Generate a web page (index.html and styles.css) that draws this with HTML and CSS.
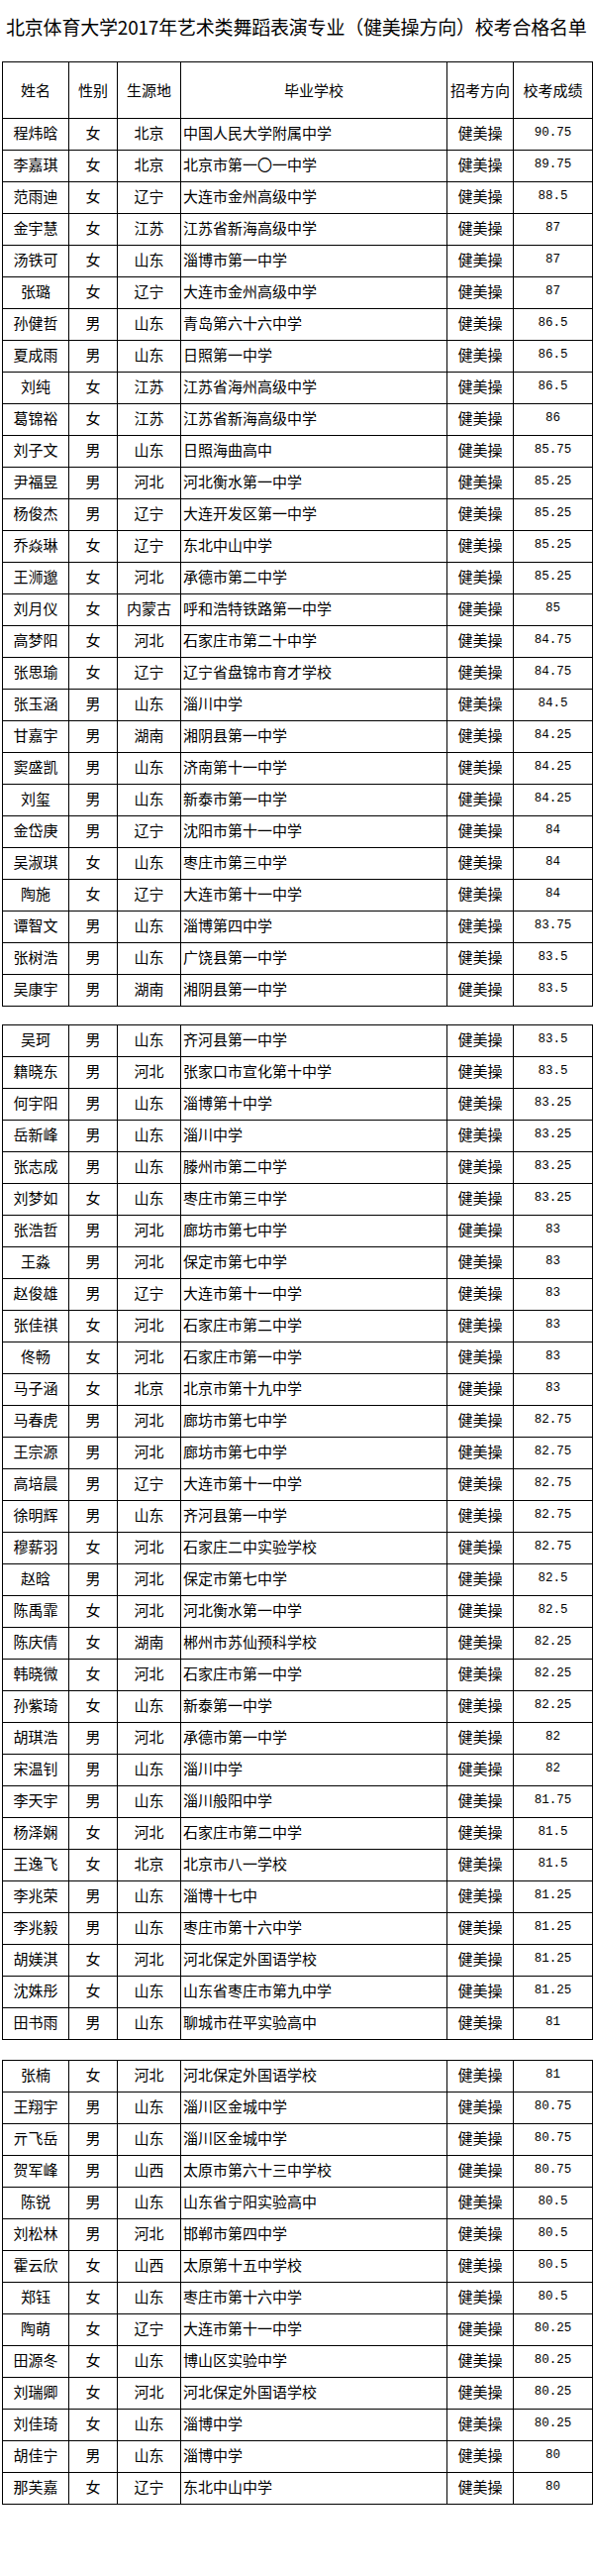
FILE: index.html
```html
<!DOCTYPE html>
<html lang="zh">
<head>
<meta charset="utf-8">
<title>北京体育大学2017年艺术类舞蹈表演专业（健美操方向）校考合格名单</title>
<link rel="stylesheet" href="styles.css">
</head>
<body>
<div class="sheet">
  <div class="title">北京体育大学2017年艺术类舞蹈表演专业（健美操方向）校考合格名单</div>

  <table class="list">
    <colgroup><col class="c-name"><col class="c-sex"><col class="c-prov"><col class="c-school"><col class="c-dir"><col class="c-score"></colgroup>
    <tr class="head"><td>姓名</td><td>性别</td><td>生源地</td><td>毕业学校</td><td>招考方向</td><td>校考成绩</td></tr>
    <tr><td>程炜晗</td><td>女</td><td>北京</td><td class="school">中国人民大学附属中学</td><td>健美操</td><td class="num">90.75</td></tr>
    <tr><td>李嘉琪</td><td>女</td><td>北京</td><td class="school">北京市第一〇一中学</td><td>健美操</td><td class="num">89.75</td></tr>
    <tr><td>范雨迪</td><td>女</td><td>辽宁</td><td class="school">大连市金州高级中学</td><td>健美操</td><td class="num">88.5</td></tr>
    <tr><td>金宇慧</td><td>女</td><td>江苏</td><td class="school">江苏省新海高级中学</td><td>健美操</td><td class="num">87</td></tr>
    <tr><td>汤铁可</td><td>女</td><td>山东</td><td class="school">淄博市第一中学</td><td>健美操</td><td class="num">87</td></tr>
    <tr><td>张璐</td><td>女</td><td>辽宁</td><td class="school">大连市金州高级中学</td><td>健美操</td><td class="num">87</td></tr>
    <tr><td>孙健哲</td><td>男</td><td>山东</td><td class="school">青岛第六十六中学</td><td>健美操</td><td class="num">86.5</td></tr>
    <tr><td>夏成雨</td><td>男</td><td>山东</td><td class="school">日照第一中学</td><td>健美操</td><td class="num">86.5</td></tr>
    <tr><td>刘纯</td><td>女</td><td>江苏</td><td class="school">江苏省海州高级中学</td><td>健美操</td><td class="num">86.5</td></tr>
    <tr><td>葛锦裕</td><td>女</td><td>江苏</td><td class="school">江苏省新海高级中学</td><td>健美操</td><td class="num">86</td></tr>
    <tr><td>刘子文</td><td>男</td><td>山东</td><td class="school">日照海曲高中</td><td>健美操</td><td class="num">85.75</td></tr>
    <tr><td>尹福昱</td><td>男</td><td>河北</td><td class="school">河北衡水第一中学</td><td>健美操</td><td class="num">85.25</td></tr>
    <tr><td>杨俊杰</td><td>男</td><td>辽宁</td><td class="school">大连开发区第一中学</td><td>健美操</td><td class="num">85.25</td></tr>
    <tr><td>乔焱琳</td><td>女</td><td>辽宁</td><td class="school">东北中山中学</td><td>健美操</td><td class="num">85.25</td></tr>
    <tr><td>王浉邈</td><td>女</td><td>河北</td><td class="school">承德市第二中学</td><td>健美操</td><td class="num">85.25</td></tr>
    <tr><td>刘月仪</td><td>女</td><td>内蒙古</td><td class="school">呼和浩特铁路第一中学</td><td>健美操</td><td class="num">85</td></tr>
    <tr><td>高梦阳</td><td>女</td><td>河北</td><td class="school">石家庄市第二十中学</td><td>健美操</td><td class="num">84.75</td></tr>
    <tr><td>张思瑜</td><td>女</td><td>辽宁</td><td class="school">辽宁省盘锦市育才学校</td><td>健美操</td><td class="num">84.75</td></tr>
    <tr><td>张玉涵</td><td>男</td><td>山东</td><td class="school">淄川中学</td><td>健美操</td><td class="num">84.5</td></tr>
    <tr><td>甘嘉宇</td><td>男</td><td>湖南</td><td class="school">湘阴县第一中学</td><td>健美操</td><td class="num">84.25</td></tr>
    <tr><td>窦盛凯</td><td>男</td><td>山东</td><td class="school">济南第十一中学</td><td>健美操</td><td class="num">84.25</td></tr>
    <tr><td>刘玺</td><td>男</td><td>山东</td><td class="school">新泰市第一中学</td><td>健美操</td><td class="num">84.25</td></tr>
    <tr><td>金岱庚</td><td>男</td><td>辽宁</td><td class="school">沈阳市第十一中学</td><td>健美操</td><td class="num">84</td></tr>
    <tr><td>吴淑琪</td><td>女</td><td>山东</td><td class="school">枣庄市第三中学</td><td>健美操</td><td class="num">84</td></tr>
    <tr><td>陶施</td><td>女</td><td>辽宁</td><td class="school">大连市第十一中学</td><td>健美操</td><td class="num">84</td></tr>
    <tr><td>谭智文</td><td>男</td><td>山东</td><td class="school">淄博第四中学</td><td>健美操</td><td class="num">83.75</td></tr>
    <tr><td>张树浩</td><td>男</td><td>山东</td><td class="school">广饶县第一中学</td><td>健美操</td><td class="num">83.5</td></tr>
    <tr><td>吴康宇</td><td>男</td><td>湖南</td><td class="school">湘阴县第一中学</td><td>健美操</td><td class="num">83.5</td></tr>
  </table>

  <table class="list gap1">
    <colgroup><col class="c-name"><col class="c-sex"><col class="c-prov"><col class="c-school"><col class="c-dir"><col class="c-score"></colgroup>
    <tr><td>吴珂</td><td>男</td><td>山东</td><td class="school">齐河县第一中学</td><td>健美操</td><td class="num">83.5</td></tr>
    <tr><td>籍晓东</td><td>男</td><td>河北</td><td class="school">张家口市宣化第十中学</td><td>健美操</td><td class="num">83.5</td></tr>
    <tr><td>何宇阳</td><td>男</td><td>山东</td><td class="school">淄博第十中学</td><td>健美操</td><td class="num">83.25</td></tr>
    <tr><td>岳新峰</td><td>男</td><td>山东</td><td class="school">淄川中学</td><td>健美操</td><td class="num">83.25</td></tr>
    <tr><td>张志成</td><td>男</td><td>山东</td><td class="school">滕州市第二中学</td><td>健美操</td><td class="num">83.25</td></tr>
    <tr><td>刘梦如</td><td>女</td><td>山东</td><td class="school">枣庄市第三中学</td><td>健美操</td><td class="num">83.25</td></tr>
    <tr><td>张浩哲</td><td>男</td><td>河北</td><td class="school">廊坊市第七中学</td><td>健美操</td><td class="num">83</td></tr>
    <tr><td>王淼</td><td>男</td><td>河北</td><td class="school">保定市第七中学</td><td>健美操</td><td class="num">83</td></tr>
    <tr><td>赵俊雄</td><td>男</td><td>辽宁</td><td class="school">大连市第十一中学</td><td>健美操</td><td class="num">83</td></tr>
    <tr><td>张佳祺</td><td>女</td><td>河北</td><td class="school">石家庄市第二中学</td><td>健美操</td><td class="num">83</td></tr>
    <tr><td>佟畅</td><td>女</td><td>河北</td><td class="school">石家庄市第一中学</td><td>健美操</td><td class="num">83</td></tr>
    <tr><td>马子涵</td><td>女</td><td>北京</td><td class="school">北京市第十九中学</td><td>健美操</td><td class="num">83</td></tr>
    <tr><td>马春虎</td><td>男</td><td>河北</td><td class="school">廊坊市第七中学</td><td>健美操</td><td class="num">82.75</td></tr>
    <tr><td>王宗源</td><td>男</td><td>河北</td><td class="school">廊坊市第七中学</td><td>健美操</td><td class="num">82.75</td></tr>
    <tr><td>高培晨</td><td>男</td><td>辽宁</td><td class="school">大连市第十一中学</td><td>健美操</td><td class="num">82.75</td></tr>
    <tr><td>徐明辉</td><td>男</td><td>山东</td><td class="school">齐河县第一中学</td><td>健美操</td><td class="num">82.75</td></tr>
    <tr><td>穆薪羽</td><td>女</td><td>河北</td><td class="school">石家庄二中实验学校</td><td>健美操</td><td class="num">82.75</td></tr>
    <tr><td>赵晗</td><td>男</td><td>河北</td><td class="school">保定市第七中学</td><td>健美操</td><td class="num">82.5</td></tr>
    <tr><td>陈禹霏</td><td>女</td><td>河北</td><td class="school">河北衡水第一中学</td><td>健美操</td><td class="num">82.5</td></tr>
    <tr><td>陈庆倩</td><td>女</td><td>湖南</td><td class="school">郴州市苏仙预科学校</td><td>健美操</td><td class="num">82.25</td></tr>
    <tr><td>韩晓微</td><td>女</td><td>河北</td><td class="school">石家庄市第一中学</td><td>健美操</td><td class="num">82.25</td></tr>
    <tr><td>孙紫琦</td><td>女</td><td>山东</td><td class="school">新泰第一中学</td><td>健美操</td><td class="num">82.25</td></tr>
    <tr><td>胡琪浩</td><td>男</td><td>河北</td><td class="school">承德市第一中学</td><td>健美操</td><td class="num">82</td></tr>
    <tr><td>宋温钊</td><td>男</td><td>山东</td><td class="school">淄川中学</td><td>健美操</td><td class="num">82</td></tr>
    <tr><td>李天宇</td><td>男</td><td>山东</td><td class="school">淄川般阳中学</td><td>健美操</td><td class="num">81.75</td></tr>
    <tr><td>杨泽娴</td><td>女</td><td>河北</td><td class="school">石家庄市第二中学</td><td>健美操</td><td class="num">81.5</td></tr>
    <tr><td>王逸飞</td><td>女</td><td>北京</td><td class="school">北京市八一学校</td><td>健美操</td><td class="num">81.5</td></tr>
    <tr><td>李兆荣</td><td>男</td><td>山东</td><td class="school">淄博十七中</td><td>健美操</td><td class="num">81.25</td></tr>
    <tr><td>李兆毅</td><td>男</td><td>山东</td><td class="school">枣庄市第十六中学</td><td>健美操</td><td class="num">81.25</td></tr>
    <tr><td>胡媄淇</td><td>女</td><td>河北</td><td class="school">河北保定外国语学校</td><td>健美操</td><td class="num">81.25</td></tr>
    <tr><td>沈姝彤</td><td>女</td><td>山东</td><td class="school">山东省枣庄市第九中学</td><td>健美操</td><td class="num">81.25</td></tr>
    <tr><td>田书雨</td><td>男</td><td>山东</td><td class="school">聊城市茌平实验高中</td><td>健美操</td><td class="num">81</td></tr>
  </table>

  <table class="list gap2">
    <colgroup><col class="c-name"><col class="c-sex"><col class="c-prov"><col class="c-school"><col class="c-dir"><col class="c-score"></colgroup>
    <tr><td>张楠</td><td>女</td><td>河北</td><td class="school">河北保定外国语学校</td><td>健美操</td><td class="num">81</td></tr>
    <tr><td>王翔宇</td><td>男</td><td>山东</td><td class="school">淄川区金城中学</td><td>健美操</td><td class="num">80.75</td></tr>
    <tr><td>亓飞岳</td><td>男</td><td>山东</td><td class="school">淄川区金城中学</td><td>健美操</td><td class="num">80.75</td></tr>
    <tr><td>贺军峰</td><td>男</td><td>山西</td><td class="school">太原市第六十三中学校</td><td>健美操</td><td class="num">80.75</td></tr>
    <tr><td>陈锐</td><td>男</td><td>山东</td><td class="school">山东省宁阳实验高中</td><td>健美操</td><td class="num">80.5</td></tr>
    <tr><td>刘松林</td><td>男</td><td>河北</td><td class="school">邯郸市第四中学</td><td>健美操</td><td class="num">80.5</td></tr>
    <tr><td>霍云欣</td><td>女</td><td>山西</td><td class="school">太原第十五中学校</td><td>健美操</td><td class="num">80.5</td></tr>
    <tr><td>郑钰</td><td>女</td><td>山东</td><td class="school">枣庄市第十六中学</td><td>健美操</td><td class="num">80.5</td></tr>
    <tr><td>陶萌</td><td>女</td><td>辽宁</td><td class="school">大连市第十一中学</td><td>健美操</td><td class="num">80.25</td></tr>
    <tr><td>田源冬</td><td>女</td><td>山东</td><td class="school">博山区实验中学</td><td>健美操</td><td class="num">80.25</td></tr>
    <tr><td>刘瑞卿</td><td>女</td><td>河北</td><td class="school">河北保定外国语学校</td><td>健美操</td><td class="num">80.25</td></tr>
    <tr><td>刘佳琦</td><td>女</td><td>山东</td><td class="school">淄博中学</td><td>健美操</td><td class="num">80.25</td></tr>
    <tr><td>胡佳宁</td><td>男</td><td>山东</td><td class="school">淄博中学</td><td>健美操</td><td class="num">80</td></tr>
    <tr><td>那芙嘉</td><td>女</td><td>辽宁</td><td class="school">东北中山中学</td><td>健美操</td><td class="num">80</td></tr>
  </table>
</div>
</body>
</html>
```

FILE: styles.css
```css
html, body {
  margin: 0;
  padding: 0;
  background: #ffffff;
}

body {
  font-family: "Noto Sans CJK SC", "DejaVu Sans", sans-serif;
  color: #000000;
}

.sheet {
  width: 596px;
  padding-left: 2px;
}

.title {
  height: 62px;
  box-sizing: border-box;
  padding-top: 16px;
  padding-left: 4px;
  font-size: 19px;
  line-height: 22px;
  white-space: nowrap;
  letter-spacing: -0.2px;
}

.list {
  width: 596px;
  border-collapse: collapse;
  table-layout: fixed;
  border: 1px solid #000;
}

.gap1 { margin-top: 18px; }
.gap2 { margin-top: 20px; }

.c-name { width: 67px; }
.c-sex { width: 49px; }
.c-prov { width: 64px; }
.c-school { width: 269px; }
.c-dir { width: 67px; }
.c-score { width: 80px; }

.list td {
  border: 1px solid #000;
  height: 32px;
  padding: 0 0 3px 0;
  box-sizing: border-box;
  text-align: center;
  vertical-align: middle;
  font-size: 15px;
  line-height: 18px;
  white-space: nowrap;
  overflow: hidden;
}

.list .head td {
  height: 57px;
  padding-bottom: 1px;
}

.list td.school {
  text-align: left;
  padding-left: 2px;
}

.list td.num {
  font-family: "Liberation Mono", "DejaVu Sans Mono", monospace;
  font-size: 12.5px;
}
```
